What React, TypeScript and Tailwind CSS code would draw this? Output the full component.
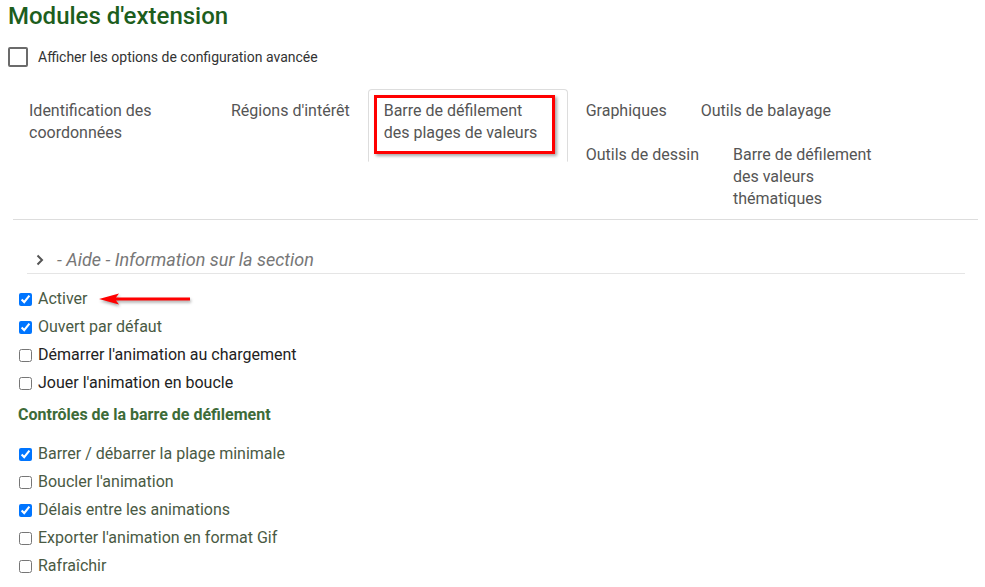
import React from "react";

const GREENISH = "text-[#4a5a44]";
const DARK = "text-[#222]";

function Opt({ label, checked, dark }: { label: string; checked?: boolean; dark?: boolean }) {
  return (
    <label className="flex items-center h-[28px] pl-[4px]">
      <input type="checkbox" defaultChecked={checked} className="m-0 w-[13px] h-[13px]" />
      <span className={`ml-[6px] text-[16px] ${dark ? DARK : GREENISH}`}>{label}</span>
    </label>
  );
}

function Tab({ children, active, extra, w }: { children: React.ReactNode; active?: boolean; extra?: string; w?: string }) {
  return (
    <div
      className={`relative shrink-0 mr-[2px] px-[15px] pt-[10px] ${extra ?? "pb-[10px]"} ${w ?? ""} border whitespace-nowrap leading-[22px] text-[16px] text-[#555] rounded-t-[4px] ${
        active ? "border-[#ddd] border-b-transparent" : "border-transparent"
      }`}
    >
      {children}
    </div>
  );
}

export default function App() {
  return (
    <div className="bg-white w-[985px] h-[587px] overflow-hidden px-[8px]" style={{ fontFamily: "Roboto, 'Liberation Sans', sans-serif" }}>
      <h1 className="pt-[2px] text-[24px] leading-[28px] font-medium text-[#1d5e1d]">Modules d'extension</h1>
      <div className="mt-[17px] flex items-center h-[20px]">
        <div className="w-[20px] h-[20px] border-2 border-[#6b6b6b] rounded-[2px]" />
        <span className="ml-[10px] text-[14px] text-[#333]">Afficher les options de configuration avancée</span>
      </div>

      <div className="mt-[22px] ml-[5px] w-[965px] flex items-start border-b border-[#ddd]">
        <Tab w="w-[200px]">
          Identification des
          <br />
          coordonnées
        </Tab>
        <Tab>Régions d'intérêt</Tab>
        <Tab active extra="pb-[17px]" w="w-[200px]">
          Barre de défilement
          <br />
          des plages de valeurs
          <div className="absolute left-[5px] top-[5px] w-[181px] h-[59px] border-[3px] border-[#f00] shadow-[2px_2px_3px_rgba(0,0,0,0.35)]" />
        </Tab>
        <div className="flex flex-col">
          <div className="flex">
            <Tab>Graphiques</Tab>
            <Tab>Outils de balayage</Tab>
          </div>
          <div className="flex">
            <Tab>Outils de dessin</Tab>
            <Tab extra="pb-[8px]" w="w-[200px]">
              Barre de défilement
              <br />
              des valeurs
              <br />
              thématiques
            </Tab>
          </div>
        </div>
      </div>

      <div className="mt-[26px] ml-[19px] w-[938px] flex items-center h-[28px] border-b border-[#e5e5e5]">
        <svg width="10" height="12" viewBox="0 0 10 12" className="ml-[8px]">
          <path d="M2.5 1.5 L7 6 L2.5 10.5" fill="none" stroke="#555" strokeWidth="2" />
        </svg>
        <span className="ml-[12px] italic text-[18px] text-[#777]">- Aide - Information sur la section</span>
      </div>

      <div className="mt-[11px] ml-[7px] relative">
        <Opt label="Activer" checked />
        <svg width="96" height="16" viewBox="0 0 96 16" className="absolute left-[84px] top-[6px]" style={{ filter: "drop-shadow(1px 2px 1.5px rgba(0,0,0,0.35))" }}>
          <path d="M0 8 L20 2.5 L17 6.5 L91 6.5 L91 9.5 L17 9.5 L20 13.5 Z" fill="#f00" />
        </svg>
        <Opt label="Ouvert par défaut" checked />
        <Opt label="Démarrer l'animation au chargement" dark />
        <Opt label="Jouer l'animation en boucle" dark />
        <div className="mt-[8px] mb-[15px] pl-[4px] -ml-[1px] text-[16px] leading-[20px] font-bold text-[#3d6b38]">
          Contrôles de la barre de défilement
        </div>
        <Opt label="Barrer / débarrer la plage minimale" checked />
        <Opt label="Boucler l'animation" />
        <Opt label="Délais entre les animations" checked />
        <Opt label="Exporter l'animation en format Gif" />
        <Opt label="Rafraîchir" />
      </div>
    </div>
  );
}
